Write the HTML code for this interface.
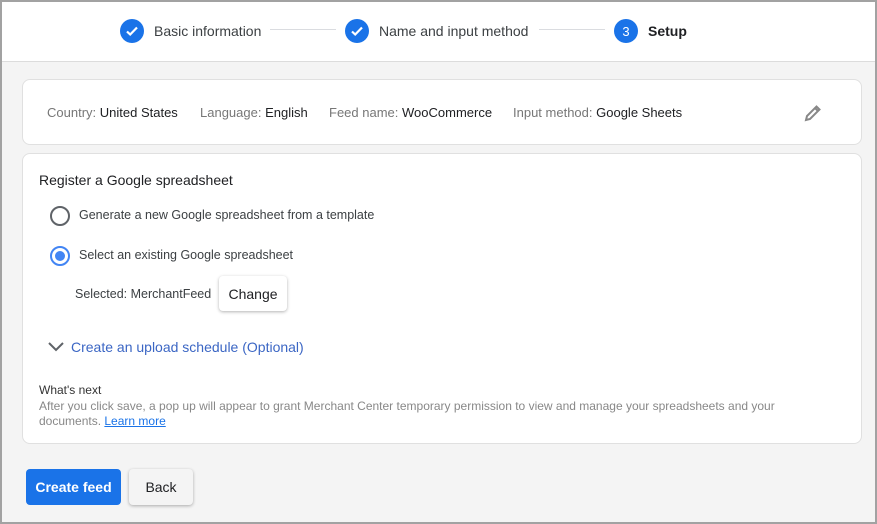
<!DOCTYPE html>
<html><head><style>
*{box-sizing:border-box;margin:0;padding:0}
body{width:877px;height:524px;overflow:hidden;font-family:"Liberation Sans",Roboto,sans-serif;background:#f4f4f4;position:relative}
.frame{position:absolute;inset:0;border:2px solid #a2a2a2;border-top-width:2px}
.top{position:absolute;left:2px;right:2px;top:2px;height:60px;background:#fff;border-bottom:1px solid #dcdcdc}
.step{position:absolute;top:17px;display:flex;align-items:center;font-size:14px;color:#3c4043}
.circ{width:24px;height:24px;border-radius:50%;background:#1a73e8;display:flex;align-items:center;justify-content:center;color:#fff;font-size:13px;margin-right:10px}
.line{position:absolute;top:29px;height:1px;background:#dadce0}
.card{position:absolute;left:22px;width:840px;background:#fff;border:1px solid #e0e0e0;border-radius:8px}
.lbl{color:#777;font-size:13px}
.val{color:#202124;font-size:13px}
.t{position:absolute;font-size:13px;color:#3c4043;white-space:nowrap}
.radio{position:absolute;width:20px;height:20px;border-radius:50%;border:2px solid #5f6368}
.btn{position:absolute;border-radius:4px;font-size:14px;display:flex;align-items:center;justify-content:center;font-weight:bold}
</style></head><body>
<div class="top">
 <div class="step" style="left:118px"><div class="circ"><svg width="14" height="14" viewBox="0 0 14 14"><path d="M2 7.5l3.2 3L12 3.5" stroke="#fff" stroke-width="2.2" fill="none"/></svg></div>Basic information</div>
 <div class="line" style="left:268px;width:66px;top:27px"></div>
 <div class="step" style="left:343px"><div class="circ"><svg width="14" height="14" viewBox="0 0 14 14"><path d="M2 7.5l3.2 3L12 3.5" stroke="#fff" stroke-width="2.2" fill="none"/></svg></div>Name and input method</div>
 <div class="line" style="left:537px;width:66px;top:27px"></div>
 <div class="step" style="left:612px;font-weight:bold;color:#202124"><div class="circ" style="font-weight:normal">3</div>Setup</div>
</div>
<div class="card" style="top:79px;height:66px">
 <div class="t" style="left:24px;top:25px"><span class="lbl">Country: </span><span class="val">United States</span></div>
 <div class="t" style="left:177px;top:25px"><span class="lbl">Language: </span><span class="val">English</span></div>
 <div class="t" style="left:306px;top:25px"><span class="lbl">Feed name: </span><span class="val">WooCommerce</span></div>
 <div class="t" style="left:490px;top:25px"><span class="lbl">Input method: </span><span class="val">Google Sheets</span></div>
 <svg style="position:absolute;left:780px;top:23px" width="20" height="20" viewBox="0 0 20 20"><path d="M3 17l1-4L13.5 3.5l3 3L7 16z" fill="none" stroke="#888" stroke-width="2"/><path d="M12 5l3 3" stroke="#888" stroke-width="2"/></svg>
</div>
<div class="card" style="top:153px;height:291px">
 <div class="t" style="left:16px;top:18px;font-size:14px;color:#202124">Register a Google spreadsheet</div>
 <div class="radio" style="left:27px;top:52px"></div>
 <div class="t" style="left:56px;top:54px;font-size:12.5px">Generate a new Google spreadsheet from a template</div>
 <div class="radio" style="left:27px;top:92px;border-color:#4285f4"><div style="position:absolute;left:3px;top:3px;width:10px;height:10px;border-radius:50%;background:#4285f4"></div></div>
 <div class="t" style="left:56px;top:94px;font-size:12.5px">Select an existing Google spreadsheet</div>
 <div class="t" style="left:52px;top:133px;font-size:12.5px">Selected: MerchantFeed</div>
 <div class="btn" style="left:196px;top:122px;width:68px;height:35px;background:#fff;box-shadow:0 1px 3px rgba(0,0,0,.3);color:#202124;font-weight:normal;font-size:14px">Change</div>
 <svg style="position:absolute;left:24px;top:187px" width="18" height="12" viewBox="0 0 18 12"><path d="M2 2l7 7 7-7" stroke="#5f6368" stroke-width="2" fill="none"/></svg>
 <div class="t" style="left:48px;top:185px;font-size:14px;color:#3b66c4">Create an upload schedule (Optional)</div>
 <div class="t" style="left:16px;top:229px;font-size:12px;color:#333">What's next</div>
 <div class="t" style="left:16px;top:245px;font-size:12px;color:#888;line-height:15px;width:795px;white-space:normal">After you click save, a pop up will appear to grant Merchant Center temporary permission to view and manage your spreadsheets and your documents. <span style="color:#1a73e8;text-decoration:underline">Learn more</span></div>
</div>
<div class="btn" style="left:26px;top:469px;width:95px;height:36px;background:#1a73e8;color:#fff">Create feed</div>
<div class="btn" style="left:129px;top:469px;width:64px;height:36px;background:#f4f4f4;box-shadow:0 1px 3px rgba(0,0,0,.3);color:#202124;font-weight:normal">Back</div>
<div class="frame"></div>
</body></html>
